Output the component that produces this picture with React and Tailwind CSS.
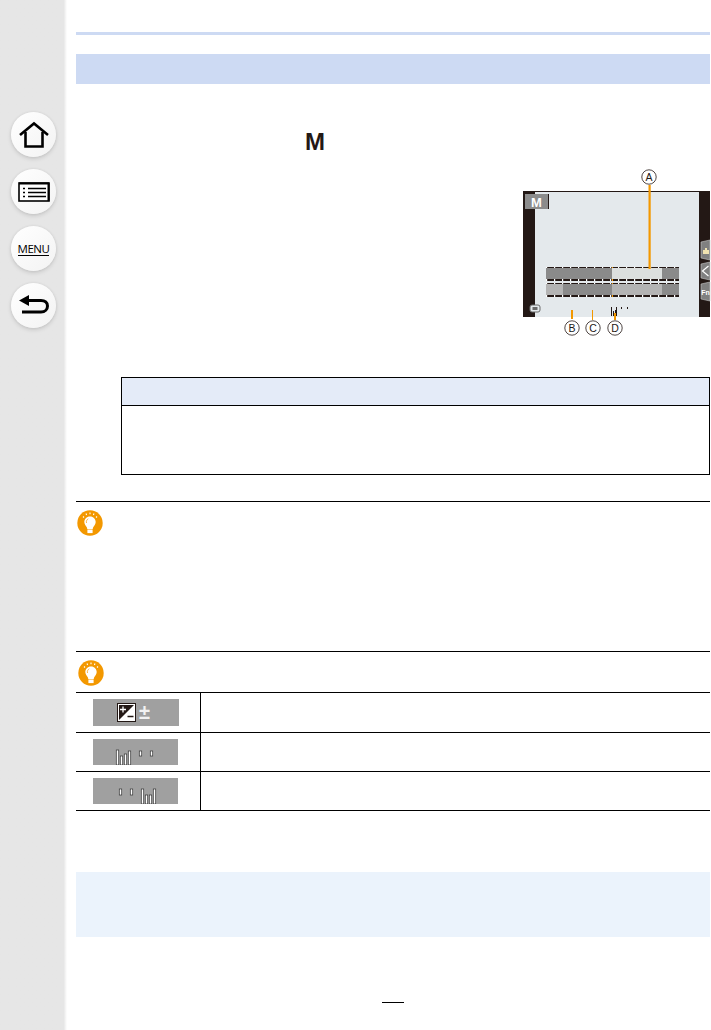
import React from 'react';

const DASHES = Array.from({ length: 17 }, (_, i) => 546 + i * 8);

function NavButton({ children }) {
  return (
    <div className="flex h-[45px] w-[45px] items-center justify-center rounded-full bg-gradient-to-br from-white to-[#f3f3f3] shadow-[0_2px_4px_rgba(0,0,0,0.13),0_0_3px_rgba(0,0,0,0.07)]">
      {children}
    </div>
  );
}

function Sidebar() {
  return (
    <aside className="flex w-[67px] shrink-0 flex-col gap-[12px] bg-gradient-to-r from-[#e6e6e6] from-[95%] to-white pl-[11px] pt-[112px]">
      <NavButton>
        <svg width="32" height="28" viewBox="0 0 32 28" fill="none" stroke="#000" strokeWidth="2.6">
          <path d="M2 14 16 2.5 30 14" strokeLinejoin="miter" />
          <path d="M7.5 11v14.5h17V11" />
        </svg>
      </NavButton>
      <NavButton>
        <svg width="32" height="20" viewBox="0 0 32 20" fill="none">
          <rect x="1" y="1" width="30" height="18" fill="#fff" stroke="#000" strokeWidth="1.6" />
          <path d="M1 1.5h30M30.5 1v18" stroke="#000" strokeWidth="2" />
          <path d="M10 6.5h18M10 10.5h18M10 14.5h18M5 6.5h2M5 10.5h2M5 14.5h2" stroke="#000" strokeWidth="1.3" />
        </svg>
      </NavButton>
      <NavButton>
        <span className="mt-px border-b border-black font-['Open_Sans',sans-serif] text-[11.5px] leading-[13px] font-normal tracking-[-0.5px] text-black">MENU</span>
      </NavButton>
      <NavButton>
        <svg width="32" height="24" viewBox="0 0 32 24" fill="none">
          <path d="M1 6.5 11 1v11z" fill="#000" />
          <path d="M8 6.5h15c4 0 6.5 2.2 6.5 5.5s-2.5 6-6.5 6H4" stroke="#000" strokeWidth="3" />
        </svg>
      </NavButton>
    </aside>
  );
}

function CameraScreen() {
  return (
    <svg width="196" height="180" viewBox="515 165 196 180" fontFamily="'Liberation Sans', sans-serif">
      <rect x="523" y="191" width="187" height="126" fill="#231815" />
      <rect x="535" y="192" width="164" height="125" fill="#e4e9ec" />
      <rect x="525" y="194" width="23" height="15" fill="#8c8c8c" />
      <rect x="548" y="194" width="1" height="15" fill="#231815" />
      <text x="536.5" y="206.5" textAnchor="middle" fontSize="13" fontWeight="700" fill="#fff">M</text>

      <rect x="546" y="267" width="66" height="13" fill="#8a8a8a" />
      <rect x="612" y="267" width="50" height="13" fill="#dcdfde" />
      <rect x="662" y="267" width="17" height="13" fill="#8a8a8a" />
      <rect x="546" y="283" width="17" height="13" fill="#b4b4b4" />
      <rect x="563" y="283" width="49" height="13" fill="#8a8a8a" />
      <rect x="612" y="283" width="50" height="13" fill="#b4b4b4" />
      <rect x="662" y="283" width="17" height="13" fill="#8a8a8a" />
      {[267, 283].map((y) => <rect key={y} x="546" y={y} width="133" height="1" fill="#231815" />)}
      {[279, 295].map((y) => <rect key={y} x="546" y={y} width="133" height="2" fill="#231815" />)}
      {DASHES.map((x) => (
        <g key={x} fill="#fff">
          <rect x={x} y="267" width="1.2" height="1" />
          <rect x={x} y="279" width="1.2" height="2" />
          <rect x={x} y="283" width="1.2" height="1" />
          <rect x={x} y="295" width="1.2" height="2" />
        </g>
      ))}
      <g fill="#f39800">
        <rect x="612" y="267" width="1" height="1" />
        <rect x="612" y="279" width="1" height="2" />
        <rect x="612" y="283" width="1" height="1" />
        <rect x="612" y="295" width="1" height="2" />
      </g>

      <path d="M701 242l9-2v20l-9-2z" fill="#808080" stroke="#c8c8c8" strokeWidth="0.6" />
      <path d="M701 264l9-2v18l-9-2z" fill="#808080" stroke="#c8c8c8" strokeWidth="0.6" />
      <path d="M701 284l9-2v19l-9-2z" fill="#808080" stroke="#c8c8c8" strokeWidth="0.6" />
      <path d="M703 250h6v4h-6zM705 248h2v2h-2z" fill="#f0e2b0" />
      <path d="M708.5 266 702.5 271l6 5" fill="none" stroke="#fff" strokeWidth="1.2" />
      <text x="705.5" y="295" textAnchor="middle" fontSize="7" fontWeight="700" fill="#fff">Fn</text>

      <rect x="530" y="305" width="10" height="7" rx="2" fill="#e4e9ec" stroke="#6a6a6a" />
      <rect x="532.5" y="307" width="5" height="3" fill="#6a6a6a" />
      <g fill="#231815">
        <rect x="611" y="307" width="1" height="9" />
        <rect x="613" y="311" width="1" height="5" />
        <rect x="615" y="310" width="1" height="6" />
        <rect x="616" y="307" width="1" height="9" />
        <rect x="621" y="307" width="1" height="2" />
        <rect x="627" y="307" width="1" height="2" />
      </g>

      <g fill="#f39800">
        <rect x="648.5" y="185" width="2.2" height="84" />
        <rect x="571" y="310" width="2" height="9" />
        <rect x="592" y="310" width="1" height="10" />
        <rect x="614" y="313" width="2" height="7" />
      </g>
      {[['A', 649, 177], ['B', 572, 328], ['C', 593, 328], ['D', 615, 328]].map(([label, x, y]) => (
        <g key={label}>
          <circle cx={x} cy={y} r="7.2" fill="#fff" stroke="#231815" strokeWidth="0.8" />
          <text x={x} y={y + 3.8} textAnchor="middle" fontSize="10.5" fill="#231815">{label}</text>
        </g>
      ))}
    </svg>
  );
}

function Bulb() {
  return (
    <svg width="26" height="26" viewBox="0 0 26 26">
      <circle cx="13" cy="13" r="12.7" fill="#f39800" />
      <path d="M13 6.5c-3.4 0-5.7 2.5-5.7 5.5 0 2.4 1.700 3.600 2.600 5.600.2.500.3 1 .3 1.400h5.600c0-.4.1-.9.3-1.400.9-2 2.600-3.200 2.600-5.600 0-3-2.300-5.500-5.700-5.500z" fill="#fff" />
      <rect x="10.400" y="19.500" width="5.200" height="3.600" fill="#fff" />
      <path d="M9.500 13c-.5-2 .4-3.500 1.800-4.200" fill="none" stroke="#f39800" strokeWidth="0.7" />
      <path d="M6 6.500l1 1M9 3.500l.6 1.500M13 2.500v1.800M17 3.500l-.6 1.500M20 6.500l-1 1" stroke="#fff" strokeWidth="1.100" />
    </svg>
  );
}

function ExposureThumb() {
  return (
    <div className="flex h-[27px] w-[86px] items-center justify-center gap-[3px] bg-[#a0a0a0] pr-[5px]">
      <svg width="19" height="19" viewBox="0 0 19 19">
        <rect x="0.500" y="0.500" width="18" height="18" fill="#fff" stroke="#231815" />
        <path d="M2 2h15L2 17z" fill="#231815" />
        <path d="M3 6.500h6M6 3.500v6" stroke="#fff" strokeWidth="1.300" />
        <path d="M10.500 13.500h6" stroke="#231815" strokeWidth="1.500" />
      </svg>
      <span className="font-['Liberation_Sans',sans-serif] text-[20px] leading-[19px] font-bold text-[#f2f2f2]">±</span>
    </div>
  );
}

function BarThumb({ bars }) {
  return (
    <svg width="85" height="26" viewBox="0 0 85 26" className="block bg-[#a0a0a0]">
      {bars.map(([x, y, w, h], i) => (
        <rect key={i} x={x + 0.3} y={y} width={w - 0.6} height={h} fill="#fff" stroke="#333" strokeWidth="0.7" />
      ))}
    </svg>
  );
}

const rows = [
  { cls: 'flex h-[40px] border-b border-black', thumb: <ExposureThumb /> },
  {
    cls: 'flex h-[39px] border-b border-black pb-0',
    thumb: <BarThumb bars={[[23, 11, 3, 15], [27, 17, 3, 9], [31, 15, 3, 11], [35, 12, 3, 14], [46, 12, 3, 5], [57, 12, 3, 5]]} />,
  },
  {
    cls: 'flex h-[39px] border-b border-black',
    thumb: <BarThumb bars={[[26, 11, 3, 6], [37, 11, 3, 6], [48, 11, 3, 15], [52, 17, 3, 9], [56, 17, 3, 9], [60, 11, 3, 15]]} />,
  },
];

export default function App() {
  return (
    <div className="flex h-[1030px] w-[711px] overflow-hidden bg-white">
      <Sidebar />
      <main className="flex-1 pl-[9px] pr-px">
        <div className="mt-[32px] h-[3px] bg-[#cddaf3]" />
        <div className="mt-[19px] h-[30px] bg-[#cddaf3]" />

        <div className="mt-[44px] h-[27px] pl-[229px] font-['Liberation_Sans',sans-serif] text-[24px] leading-[27px] font-bold text-[#231815]">M</div>
        <div className="-mr-px mt-[10px] flex h-[180px] justify-end">
          <CameraScreen />
        </div>

        <div className="ml-[45px] mt-[32px] h-[98px] border border-black">
          <div className="h-[28px] border-b border-black bg-[#e4ebf8]" />
        </div>

        <div className="mt-[26px] h-px bg-black" />
        <div className="ml-px mt-[8px] h-[141px]">
          <Bulb />
        </div>

        <div className="h-px bg-black" />
        <div className="ml-[2px] mt-[8px] h-[32px]">
          <Bulb />
        </div>

        <div className="border-t border-black">
          {rows.map((row, i) => (
            <div key={i} className={row.cls}>
              <div className="flex w-[125px] items-center border-r border-black pl-[17px]">{row.thumb}</div>
            </div>
          ))}
        </div>

        <div className="mt-[61px] h-[65px] bg-[#ebf3fc]" />

        <div className="ml-[306px] mt-[65px] h-px w-[22px] bg-black" />
      </main>
    </div>
  );
}
